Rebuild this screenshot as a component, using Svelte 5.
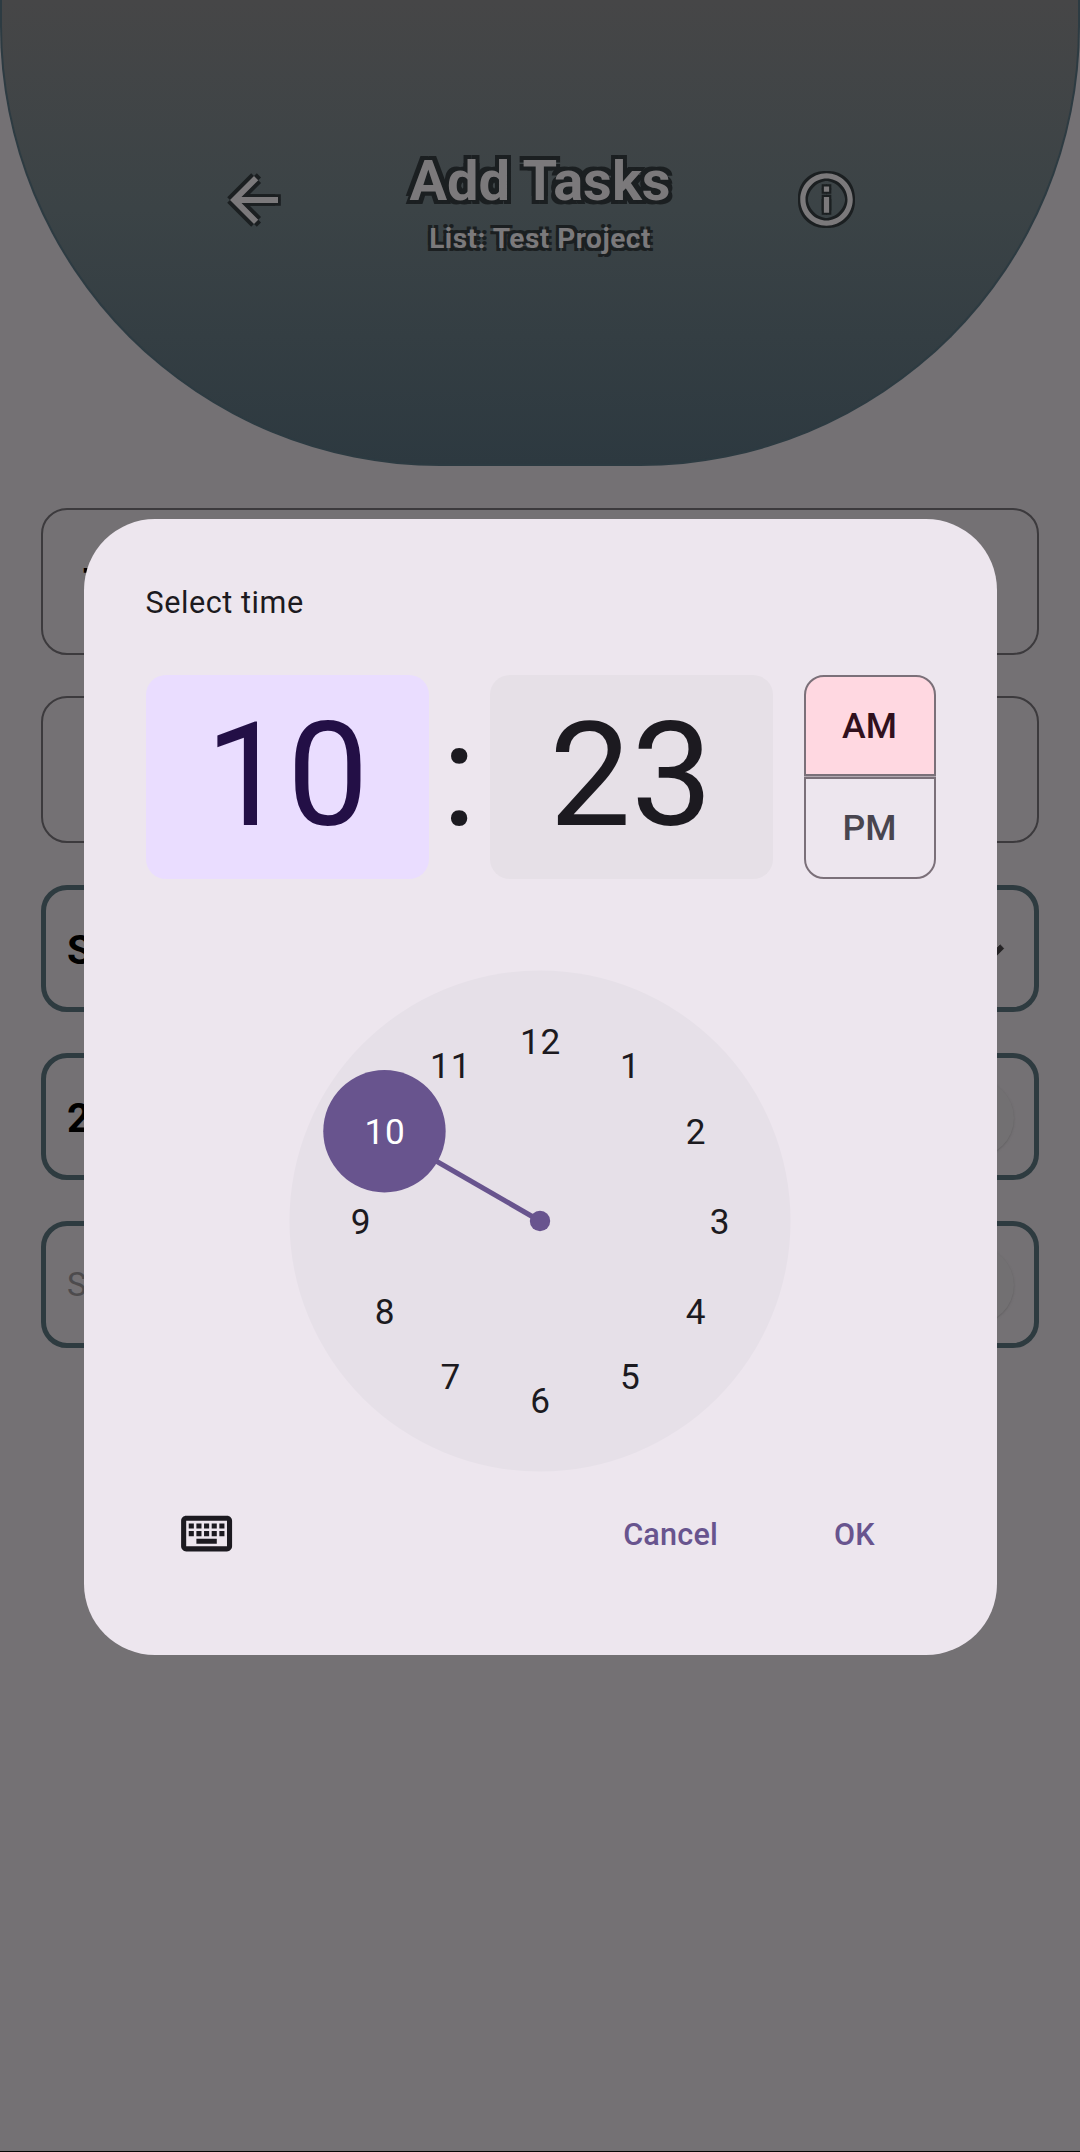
<script>
  const corners = [[-1, -1], [1, -1], [-1, 1], [1, 1]];
  const hours = Array.from({ length: 12 }, (_, i) => {
    const n = i + 1;
    const a = (n * Math.PI) / 6;
    return { n, x: 251 + Math.sin(a) * 179.6, y: 251 - Math.cos(a) * 179.6 };
  });
  const selected = 10;
  const hand = hours[selected - 1];
  const arrow = 'M20 11H7.83l5.59-5.59L12 4l-8 8 8 8 1.41-1.41L7.83 13H20v-2z';
  const info =
    'M11 7h2v2h-2zm0 4h2v6h-2zm1-9C6.48 2 2 6.48 2 12s4.48 10 10 10 10-4.48 10-10S17.52 2 12 2zm0 18c-4.41 0-8-3.59-8-8s3.59-8 8-8 8 3.59 8 8-3.59 8-8 8z';
</script>

{#snippet outlined(path, size, spread)}
  <svg width={size} height={size} viewBox="0 0 24 24" class="outlined">
    {#each corners as [x, y]}
      <path
        d={path}
        class="shade"
        transform={`translate(${(x * spread * 24) / size} ${(y * spread * 24) / size})`}
      />
    {/each}
    <path d={path} class="face" />
  </svg>
{/snippet}

<div class="screen">
  <header>
    <div class="side left">{@render outlined(arrow, 72, 2.8)}</div>
    <div class="titles">
      <h1>Add Tasks</h1>
      <p>List: Test Project</p>
    </div>
    <div class="side right">{@render outlined(info, 63, 2.2)}</div>
  </header>

  <main>
    <div class="field input"><span>T</span></div>
    <div class="field input"></div>
    <div class="field row">
      <span>S</span>
      <svg class="chevron" width="61" height="61" viewBox="0 0 24 24">
        <path d="M7.41 8.59 12 13.17l4.59-4.58L18 10l-6 6-6-6z" />
      </svg>
    </div>
    <div class="field row"><span>2</span><i class="knob"></i></div>
    <div class="field row hint"><span>S</span><i class="knob"></i></div>
  </main>

  <div class="layer">
    <section class="dialog">
      <h2>Select time</h2>
      <div class="time">
        <div class="digits hour">10</div>
        <div class="colon">:</div>
        <div class="digits minute">23</div>
        <div class="period">
          <div class="am">AM</div>
          <div class="pm">PM</div>
        </div>
      </div>
      <svg class="dial" width="502" height="502" viewBox="0 0 502 502">
        <circle cx="251" cy="251" r="250.500" class="plate" />
        <line x1="251" y1="251" x2={hand.x} y2={hand.y} />
        <circle cx="251" cy="251" r="10.2" class="accent" />
        <circle cx={hand.x} cy={hand.y} r="61.2" class="accent" />
        {#each hours as h}
          <text x={h.x + 0.6} y={h.y + 12.8} class:on={h.n === selected}>{h.n}</text>
        {/each}
      </svg>
      <footer>
        <svg class="keyboard" width="61.2" height="61.2" viewBox="0 0 24 24">
          <path d="M20 7v10H4V7h16m0-2H4c-1.100 0-1.990.9-1.990 2L2 17c0 1.100.9 2 2 2h16c1.100 0 2-.9 2-2V7c0-1.100-.9-2-2-2zm-9 3h2v2h-2V8zm0 3h2v2h-2v-2zM8 8h2v2H8V8zm0 3h2v2H8v-2zm-3 0h2v2H5v-2zm0-3h2v2H5V8zm3 6h8v2H8v-2zm6-3h2v2h-2v-2zm0-3h2v2h-2V8zm3 3h2v2h-2v-2zm0-3h2v2h-2V8z" />
        </svg>
        <button class="cancel">Cancel</button>
        <button class="ok">OK</button>
      </footer>
    </section>
  </div>
</div>

<style>
  :global(body) {
    margin: 0;
    background: #747174;
  }
  * {
    box-sizing: border-box;
  }
  .screen {
    position: relative;
    width: 1080px;
    height: 2152px;
    overflow: hidden;
    background: #747174;
    border-bottom: 1px solid #060606;
    font-family: Roboto, sans-serif;
  }
  header {
    display: grid;
    grid-template-columns: 1fr 300px 1fr;
    align-items: start;
    height: 466px;
    border: 2px solid #2d3b42;
    border-top: 0;
    border-radius: 0 0 440px 440px;
    background: linear-gradient(#464647, #3b4346 45%, #2d3940);
  }
  .side {
    display: flex;
  }
  .left {
    padding: 164px 0 0 216px;
  }
  .right {
    padding: 168px 0 0 105px;
  }
  .outlined {
    overflow: visible;
  }
  .shade {
    fill: #1b1f21;
  }
  .face {
    fill: #7b797b;
  }
  .titles {
    text-align: center;
    color: #7b797b;
    white-space: nowrap;
  }
  h1 {
    margin: 148px 0 0;
    font-size: 56px;
    line-height: 66px;
    font-weight: 700;
    text-shadow: -4px -4px #1b1f21, 4px -4px #1b1f21, -4px 4px #1b1f21, 4px 4px #1b1f21;
  }
  p {
    margin: 8px 0 0;
    font-size: 28px;
    line-height: 33px;
    font-weight: 700;
    letter-spacing: 0.5px;
    text-shadow: -3px -3px #1b1f21, 3px -3px #1b1f21, -3px 3px #1b1f21, 3px 3px #1b1f21;
  }
  main {
    display: flex;
    flex-direction: column;
    gap: 41px;
    padding: 42px 41px 0;
  }
  .field {
    display: flex;
    border-radius: 26px;
    color: #000;
    font-size: 40.8px;
    font-weight: 700;
  }
  .input {
    height: 147px;
    border: 2px solid #3c3a3d;
    padding: 49px 0 0 40px;
    line-height: 48px;
  }
  .input + .input {
    margin-bottom: 1px;
  }
  .row {
    height: 127px;
    border: 5px solid #2e3b40;
    align-items: center;
    justify-content: space-between;
    padding: 2px 20px 0 21px;
  }
  .input + .row ~ .row {
    margin-bottom: 0;
  }
  .hint {
    font-size: 33px;
    font-weight: 400;
    color: #4d4b4d;
    padding-top: 0;
  }
  .chevron {
    margin-right: -5px;
    margin-top: 7px;
    fill: #252325;
    stroke: #252325;
    stroke-width: 0.3;
    stroke-linejoin: round;
  }
  .knob {
    width: 78px;
    height: 78px;
    border-radius: 50%;
    background: #727072;
    box-shadow: 0 1px 2px #626062;
    margin-top: 1px;
  }
  .layer {
    position: absolute;
    inset: 0;
    display: flex;
    justify-content: center;
    align-items: flex-start;
    padding-top: 518.500px;
  }
  .dialog {
    width: 913px;
    height: 1136.500px;
    border-radius: 71px;
    background: #ede6ee;
    padding: 66px 61px 0 62px;
    color: #1c1a20;
  }
  h2 {
    margin: 0;
    font-size: 30.6px;
    line-height: 36px;
    font-weight: 400;
    letter-spacing: 0.55px;
  }
  .time {
    display: flex;
    margin-top: 54px;
    height: 204px;
  }
  .digits {
    width: 283px;
    border-radius: 20px;
    font-size: 145.4px;
    line-height: 201px;
    text-align: center;
  }
  .hour {
    background: #eaddff;
    color: #230f46;
  }
  .minute {
    background: #e6e0e7;
  }
  .colon {
    width: 61px;
    font-size: 145.4px;
    line-height: 201px;
    display: flex;
    justify-content: center;
  }
  .period {
    margin-left: 31px;
    width: 132px;
    display: flex;
    flex-direction: column;
    gap: 1px;
    font-size: 35.7px;
    font-weight: 500;
    text-align: center;
    background: linear-gradient(#b3a9b1, #b3a9b1) center / 100% 5px no-repeat;
  }
  .am,
  .pm {
    height: 101.500px;
    line-height: 99px;
    border: 2px solid #7b7079;
  }
  .am {
    border-radius: 20px 20px 0 0;
    background: #ffd8e1;
    color: #31101d;
  }
  .pm {
    border-radius: 0 0 20px 20px;
    background: #ede6ee;
    color: #49454f;
  }
  .dial {
    display: block;
    margin: 91.500px 0 0 143.200px;
  }
  .plate {
    fill: #e6e0e8;
  }
  .accent {
    fill: #68548e;
  }
  line {
    stroke: #68548e;
    stroke-width: 5.1;
  }
  text {
    font-size: 35.200px;
    letter-spacing: 0.9px;
    text-anchor: middle;
    fill: #1c1a20;
  }
  text.on {
    fill: #fff;
  }
  footer {
    display: flex;
    align-items: center;
    height: 62px;
    margin-top: 31px;
    padding-left: 30px;
  }
  .keyboard {
    fill: #1c1a20;
  }
  button {
    border: 0;
    background: none;
    padding: 1px 0 0;
    font: 500 30.6px/36px Roboto, sans-serif;
    letter-spacing: 0.2px;
    color: #68548e;
  }
  .cancel {
    margin-left: 386.500px;
  }
  .ok {
    margin-left: 116px;
  }
</style>
